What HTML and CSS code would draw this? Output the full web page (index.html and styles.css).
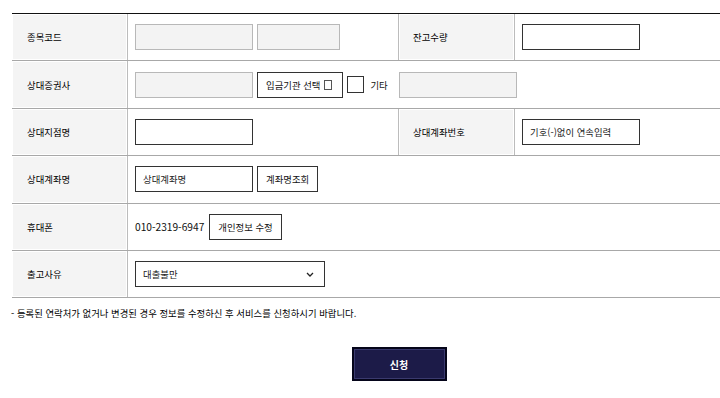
FILE: index.html
```html
<!DOCTYPE html>
<html lang="ko">
<head>
<meta charset="utf-8">
<link rel="stylesheet" href="styles.css">
</head>
<body>
<div class="page">
  <div class="form">
    <div class="row">
      <div class="th">종목코드</div>
      <div class="td"><span class="inp gray"></span><span class="inp gray short"></span></div>
      <div class="th th2">잔고수량</div>
      <div class="td"><span class="inp"></span></div>
    </div>
    <div class="row">
      <div class="th">상대증권사</div>
      <div class="td span3">
        <span class="inp gray"></span>
        <span class="btn wide">입금기관 선택 <span class="tofu"></span></span>
        <span class="chk"></span>
        <span class="etc">기타</span>
        <span class="inp gray"></span>
      </div>
    </div>
    <div class="row">
      <div class="th">상대지점명</div>
      <div class="td"><span class="inp"></span></div>
      <div class="th th2">상대계좌번호</div>
      <div class="td"><span class="inp">기호(-)없이 연속입력</span></div>
    </div>
    <div class="row">
      <div class="th">상대계좌명</div>
      <div class="td span3"><span class="inp">상대계좌명</span><span class="btn">계좌명조회</span></div>
    </div>
    <div class="row">
      <div class="th">휴대폰</div>
      <div class="td span3"><span class="phone">010-2319-6947</span><span class="btn">개인정보 수정</span></div>
    </div>
    <div class="row">
      <div class="th">출고사유</div>
      <div class="td span3">
        <span class="inp select">대출불만
          <svg class="chev" width="8" height="5" viewBox="0 0 8 5"><path d="M1 1 L4 4 L7 1" fill="none" stroke="#222" stroke-width="1.3"/></svg>
        </span>
      </div>
    </div>
  </div>
  <p class="note">- 등록된 연락처가 없거나 변경된 경우 정보를 수정하신 후 서비스를 신청하시기 바랍니다.</p>
  <div class="actions"><span class="submit">신청</span></div>
</div>
</body>
</html>
```

FILE: styles.css
```css
html, body {
  margin: 0;
  padding: 0;
  background: #fff;
  overflow: hidden;
}
body {
  font-family: "Noto Sans CJK KR", "Noto Sans", sans-serif;
  font-size: 9.4px;
  color: #111;
}
.page {
  width: 782px;
  margin-left: 8px;
  padding-top: 13px;
}
.form {
  margin-left: 4px;
  border-top: 1px solid #111;
}
.row {
  display: grid;
  grid-template-columns: 116px 270px 117px 1fr;
  height: 46.4px;
  border-bottom: 1px solid #a8a8a8;
}
.th {
  background: #f4f4f4;
  box-shadow: inset 0 0 0 1px #fff;
  border-right: 1px solid #bcbcbc;
  display: flex;
  align-items: center;
  padding-left: 15px;
  color: #000;
}
.th2 {
  border-left: 1px solid #bcbcbc;
  padding-left: 14px;
}
.td {
  display: flex;
  align-items: center;
  padding-left: 7px;
}
.span3 {
  grid-column: 2 / 5;
}
.inp {
  box-sizing: border-box;
  width: 118px;
  height: 26px;
  border: 1px solid #333;
  background: #fff;
  display: flex;
  align-items: center;
  padding-left: 7px;
  margin-right: 4px;
  color: #222;
}
.inp.gray {
  background: #f3f3f3;
  border-color: #b8b8b8;
}
.inp.short {
  width: 83px;
}
.btn {
  box-sizing: border-box;
  height: 26px;
  border: 1px solid #333;
  background: #fff;
  display: flex;
  align-items: center;
  padding: 0 8px;
  margin-right: 4px;
  color: #111;
}
.btn.wide {
  padding-right: 10px;
}
.tofu {
  display: inline-block;
  width: 6px;
  height: 8px;
  border: 1px solid #555;
  margin-left: 4px;
}
.chk {
  box-sizing: border-box;
  width: 17px;
  height: 17px;
  border: 1px solid #333;
  margin-right: 6px;
}
.etc {
  margin-right: 11px;
}
.phone {
  margin-right: 5px;
  font-size: 10.2px;
}
.inp.select {
  width: 190px;
  justify-content: space-between;
  padding-right: 10px;
}
.chev {
  display: block;
}
.note {
  margin: 7px 0 0 3px;
  color: #000;
  line-height: 16px;
}
.actions {
  display: flex;
  justify-content: center;
  margin-top: 26px;
}
.submit {
  box-sizing: border-box;
  width: 95px;
  height: 34px;
  background: #1c1b48;
  border: 2px solid #05051a;
  box-shadow: inset 0 0 0 1px #3a3a6e;
  color: #fff;
  font-weight: bold;
  font-size: 10px;
  display: flex;
  align-items: center;
  justify-content: center;
}
```
